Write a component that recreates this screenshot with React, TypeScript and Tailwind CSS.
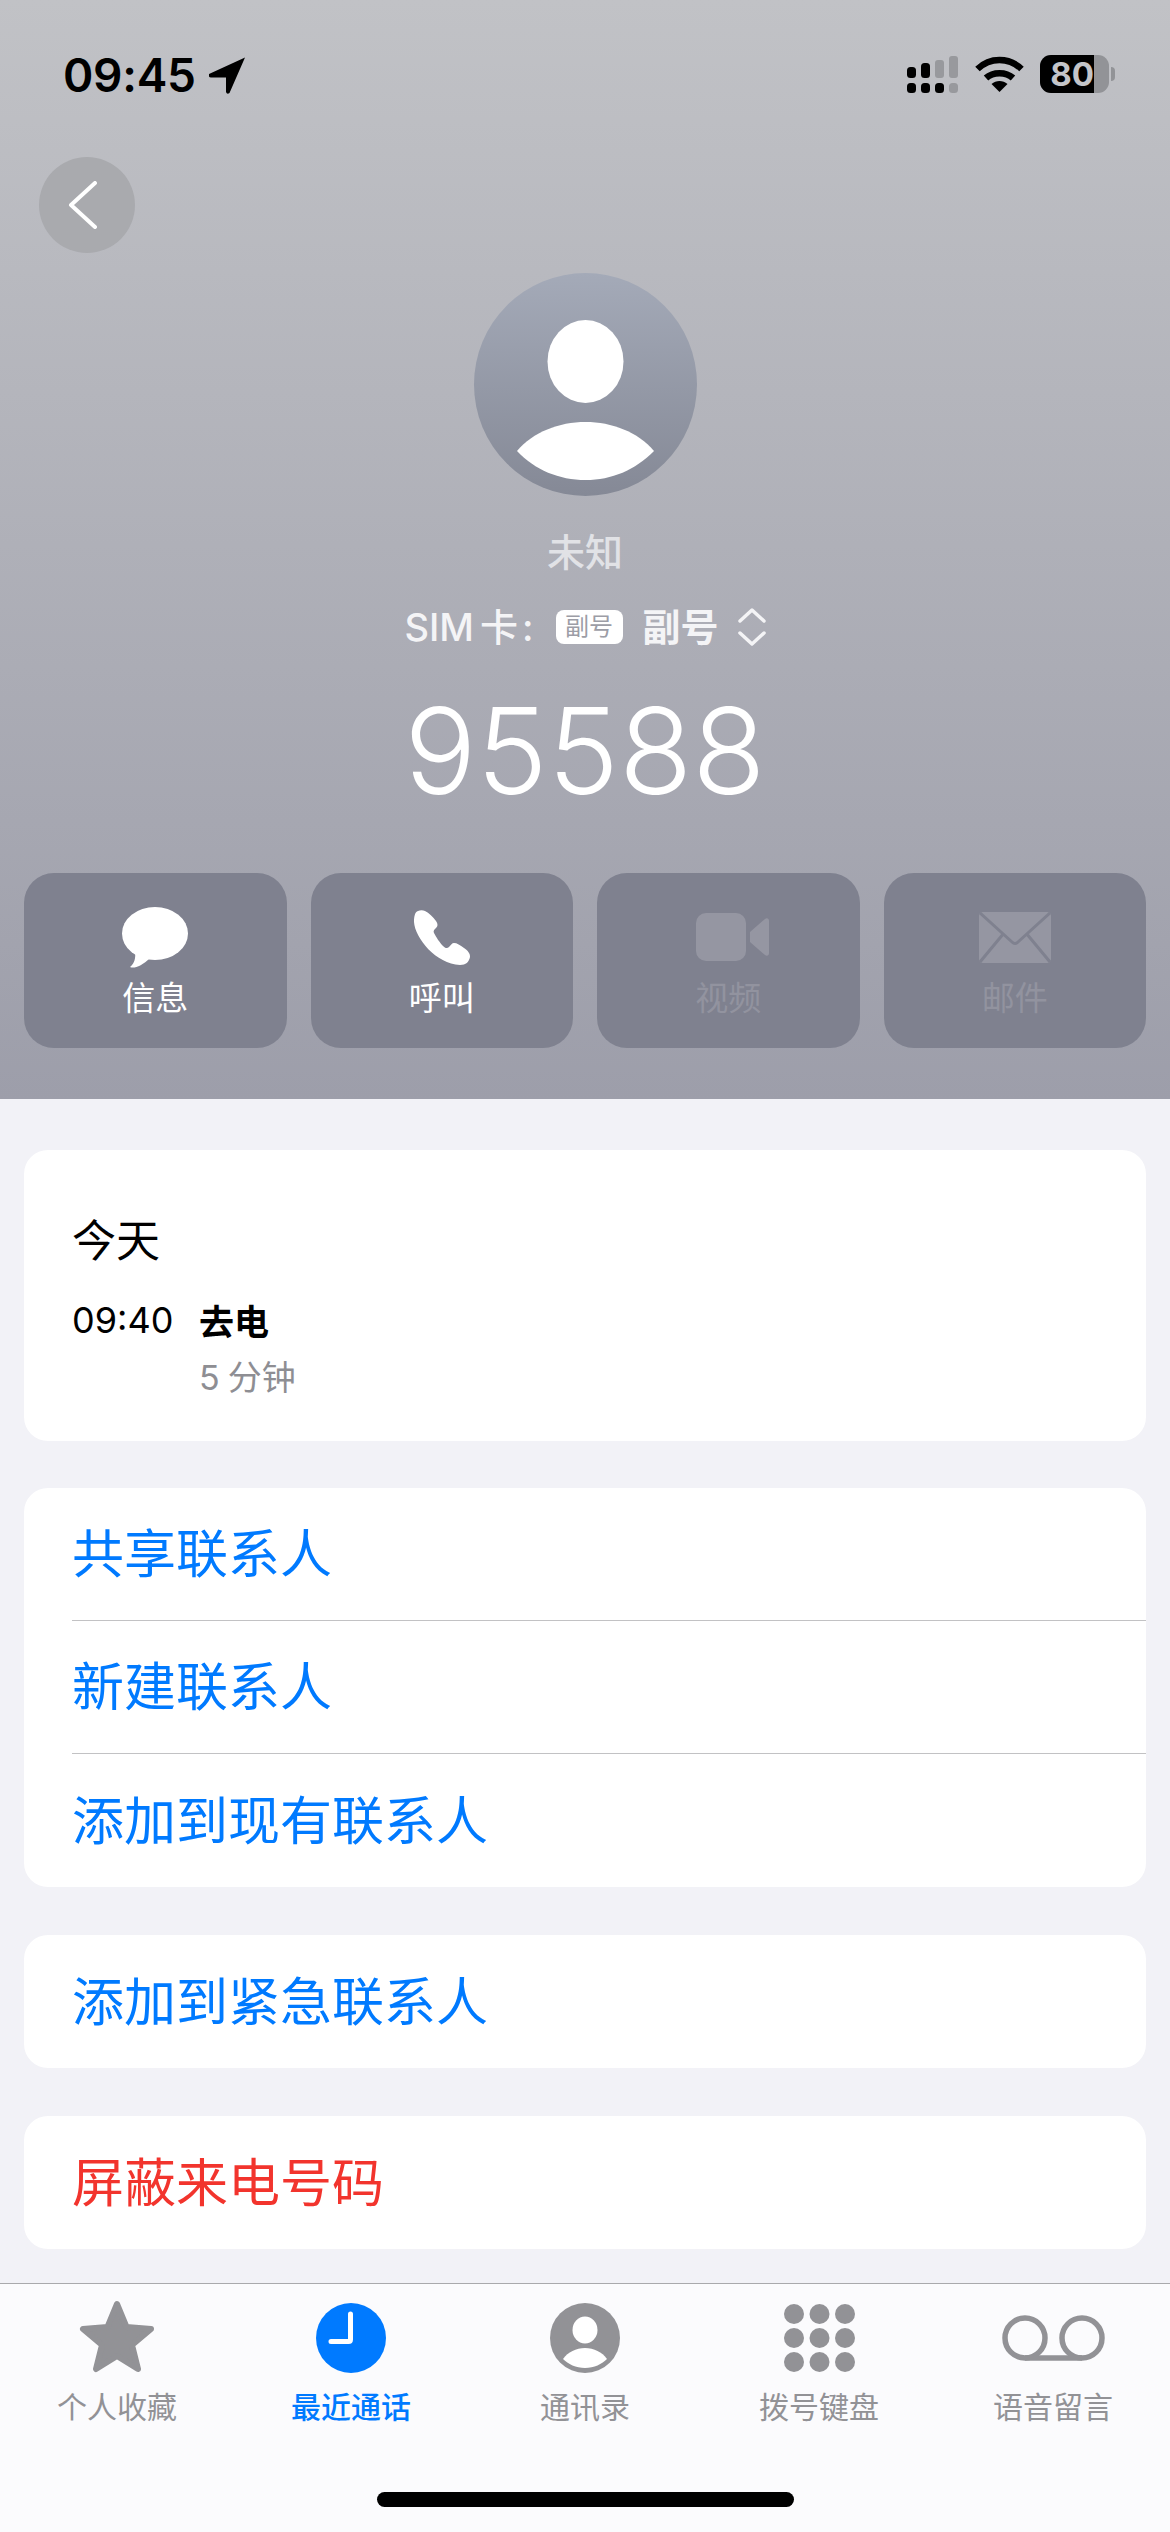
import type { ReactNode } from "react";

const actions = [
  { label: "信息", off: false, icon: <BubbleIcon /> },
  { label: "呼叫", off: false, icon: <PhoneIcon /> },
  { label: "视频", off: true, icon: <VideoIcon /> },
  { label: "邮件", off: true, icon: <MailIcon /> },
];

const tabs = [
  { label: "个人收藏", active: false, icon: <StarIcon /> },
  { label: "最近通话", active: true, icon: <ClockIcon /> },
  { label: "通讯录", active: false, icon: <PersonIcon /> },
  { label: "拨号键盘", active: false, icon: <KeypadIcon /> },
  { label: "语音留言", active: false, icon: <VoicemailIcon /> },
];

function BubbleIcon() {
  return (
    <svg width="66" height="61" viewBox="0 0 66 61" fill="#fff">
      <ellipse cx="33" cy="26.5" rx="33" ry="26.5" />
      <path d="M13 44 C14 52 12 57 8 60 C12 62 20 59 28 51 Z" />
    </svg>
  );
}

function PhoneIcon() {
  return (
    <svg width="56" height="55" viewBox="0 0 56 55" fill="#fff">
      <path d="M4 1 C1 2 0 6 0 12 C1 28 22 54 46 55 C52 55 55 52 56 47 C56 43 54 41 50 38 C46 35 43 33 40 33 C38 33 37 35 35 37 C33 39 31 38 29 36 C26 33 22 27 20 23 C19 21 20 20 22 18 C24 16 24 14 22 11 C19 7 15 3 11 1 C9 0 6 0 4 1 Z" />
    </svg>
  );
}

function VideoIcon() {
  return (
    <svg className="ml-2" width="73" height="48" viewBox="0 0 73 48" fill="#9596a2">
      <rect x="0" y="0" width="50" height="48" rx="10" />
      <path d="M54 19 L69 6 C71 4.500 73 5.500 73 8 V40 C73 42.500 71 43.500 69 42 L54 29 Z" />
    </svg>
  );
}

function MailIcon() {
  return (
    <svg width="72" height="51" viewBox="0 0 72 51">
      <rect width="72" height="51" rx="4" fill="#9596a2" />
      <path d="M1 1 L33 30 Q36 33 39 30 L71 1 M1 50 L25 21 M71 50 L47 21" fill="none" stroke="#7f818f" strokeWidth="3" />
    </svg>
  );
}

function StarIcon() {
  return (
    <svg className="-mt-1" width="76" height="73" viewBox="0 0 76 73" fill="#929296">
      <path
        d="M38 4 L47.500 27 L72 29 L53 45 L59 69 L38 56 L17 69 L23 45 L4 29 L28.500 27 Z"
        stroke="#929296"
        strokeWidth="6"
        strokeLinejoin="round"
      />
    </svg>
  );
}

function ClockIcon() {
  return (
    <svg width="70" height="70" viewBox="0 0 70 70">
      <circle cx="35" cy="35" r="35" fill="#007aff" />
      <path d="M34.500 11 V36.500 Q34.500 38.500 32.500 38.500 H15" fill="none" stroke="#fff" strokeWidth="5" strokeLinecap="round" />
    </svg>
  );
}

function PersonIcon() {
  return (
    <svg width="70" height="70" viewBox="0 0 70 70">
      <circle cx="35" cy="35" r="35" fill="#929296" />
      <ellipse cx="35" cy="27" rx="12.500" ry="13.500" fill="#fff" />
      <path d="M13 56 C18 49 26 45 35 45 C44 45 52 49 57 56 C52 61 44 65 35 65 C26 65 18 61 13 56 Z" fill="#fff" />
    </svg>
  );
}

function KeypadIcon() {
  const xs = [10, 35.500, 61];
  const ys = [10, 34, 58];
  return (
    <svg width="71" height="68" viewBox="0 0 71 68" fill="#929296">
      {ys.map((y) => xs.map((x) => <circle key={`${x}-${y}`} cx={x} cy={y} r="10" />))}
    </svg>
  );
}

function VoicemailIcon() {
  return (
    <svg width="103" height="46" viewBox="0 0 103 46" fill="none" stroke="#929296" strokeWidth="5.500">
      <circle cx="23" cy="23" r="20" />
      <circle cx="80" cy="23" r="20" />
      <path d="M23 43 H80" />
    </svg>
  );
}

function StatusIcons() {
  return (
    <div className="flex items-center">
      <svg width="52" height="37" viewBox="0 0 52 37">
        <g fill="#000">
          <rect x="0" y="11" width="9" height="11" rx="3.500" />
          <rect x="14" y="7" width="9" height="15" rx="3.500" />
          <rect x="0" y="27" width="9" height="10" rx="3.500" />
          <rect x="14" y="27" width="9" height="10" rx="3.500" />
          <rect x="28" y="27" width="9" height="10" rx="3.500" />
        </g>
        <g fill="#98999d">
          <rect x="28" y="4" width="9" height="18" rx="3" />
          <rect x="42" y="0" width="9" height="22" rx="3" />
          <rect x="42" y="27" width="9" height="10" rx="3.500" />
        </g>
      </svg>
      <svg className="ml-4" width="49" height="36" viewBox="0 0 49 36" fill="none" stroke="#000">
        <path d="M2.500 13 C15 1 34 1 46.500 13" strokeWidth="6.500" />
        <path d="M11 22 C18 15.500 31 15.500 38 22" strokeWidth="6.500" />
        <path d="M24.500 36 L16.500 28 C21 24 28 24 32.500 28 Z" fill="#000" stroke="none" />
      </svg>
      <div className="ml-4 flex h-[38px] w-[69px] overflow-hidden rounded-[11px] bg-[#929397]">
        <div className="flex w-[54px] items-center justify-end overflow-hidden bg-black text-[33px] leading-none font-bold text-[#c4c5c9]">
          80
        </div>
      </div>
      <div className="ml-0.5 h-3.5 w-1 rounded-r-full bg-[#929397]" />
    </div>
  );
}

function Card({ className = "", children }: { className?: string; children: ReactNode }) {
  return <div className={`overflow-hidden rounded-[24px] bg-white ${className}`}>{children}</div>;
}

function LinkRow({ label, red, line }: { label: string; red?: boolean; line?: boolean }) {
  return (
    <div className="pl-12">
      <div
        className={`flex h-[133px] items-center border-[#c2c2c4] pt-0.5 text-[52px] leading-none ${
          line ? "border-b" : ""
        } ${red ? "text-[#f2342d]" : "text-[#007aff]"}`}
      >
        {label}
      </div>
    </div>
  );
}

export default function App() {
  return (
    <div className="flex h-[2532px] w-[1170px] flex-col overflow-hidden bg-[#f2f2f7] font-['Inter','Noto_Sans_CJK_SC',sans-serif] text-black">
      <header className="flex h-[1099px] flex-col bg-gradient-to-b from-[#c1c2c6] to-[#9d9eaa]">
        <div className="flex h-[157px] items-start justify-between pt-[55px] pr-[55px] pl-[63px]">
          <div className="flex items-center gap-[13px]">
            <span className="text-[46px] leading-[40px] font-semibold tracking-[-0.25px]">09:45</span>
            <svg width="37" height="37" viewBox="0 0 37 37" fill="#000">
              <path d="M36 0.500 L0 17 Q-1 20 2 20.500 L17 20.500 L17 35 Q18 38 20.500 36 Z" />
            </svg>
          </div>
          <StatusIcons />
        </div>

        <button className="ml-[39px] flex size-[96px] items-center justify-center rounded-full bg-[#a9aaae]">
          <svg className="-ml-2" width="30" height="48" viewBox="0 0 30 48" fill="none" stroke="#fff" strokeWidth="4" strokeLinecap="round" strokeLinejoin="round">
            <path d="M27 2 L3 24 L27 46" />
          </svg>
        </button>

        <div className="mt-5 flex flex-col items-center">
          <div className="flex size-[223px] items-start justify-center rounded-full bg-gradient-to-b from-[#a4aab8] to-[#858996]">
            <svg width="137" height="160" viewBox="0 0 137 160" className="mt-[47px]" fill="#fff">
              <ellipse cx="68.500" cy="41.500" rx="38" ry="41.500" />
              <path d="M0 131 C16 112 42 102 68.500 102 C95 102 121 112 137 131 C118 150 95 160 68.500 160 C42 160 18 150 0 131 Z" />
            </svg>
          </div>
          <div className="mt-[33px] text-[38px] leading-[46px] font-medium text-[#e1e2e6]">未知</div>
          <div className="mt-[27px] flex h-[50px] items-center text-[38px] leading-none font-medium text-[#f4f4f6]">
            <span>SIM</span>
            <span className="ml-1.5">卡</span>
            <span className="ml-1">:</span>
            <span className="ml-[22px] flex h-[34px] w-[67px] items-center justify-center rounded-lg bg-white text-[24px] font-normal text-[#9c9da6]">
              副号
            </span>
            <span className="ml-5 font-semibold">副号</span>
            <svg className="ml-[19px]" width="28" height="38" viewBox="0 0 28 38" fill="none" stroke="#f4f4f6" strokeWidth="3.500" strokeLinecap="round" strokeLinejoin="round">
              <path d="M2 13 L14 2 L26 13 M2 25 L14 36 L26 25" />
            </svg>
          </div>
          <div className="mt-[30px] text-[120px] leading-[138px] font-[350] text-white">95588</div>
        </div>

        <div className="mt-[53px] grid grid-cols-4 gap-6 px-6">
          {actions.map((a) => (
            <div
              key={a.label}
              className="flex h-[175px] flex-col items-center rounded-[30px] bg-[#7f818f]"
            >
              <div className="flex h-[100px] items-center justify-center pt-[28px]">{a.icon}</div>
              <div className={`mt-1 text-[33px] leading-[42px] ${a.off ? "text-[#92939f]" : "text-white"}`}>
                {a.label}
              </div>
            </div>
          ))}
        </div>
      </header>

      <main className="flex-1 px-6 pt-[51px]">
        <Card className="h-[291px] pt-[66px] pl-12">
          <div className="text-[44px] leading-[50px]">今天</div>
          <div className="mt-[27px] flex">
            <div className="w-[127px] pt-[5px] text-[36px] leading-[44px]">09:40</div>
            <div className="pt-[7px]">
              <div className="text-[35px] leading-[44px] font-semibold">去电</div>
              <div className="mt-3 flex text-[34px] leading-[44px] text-[#8e8e93]">
                <span>5</span>
                <span className="ml-2">分钟</span>
              </div>
            </div>
          </div>
        </Card>
        <Card className="mt-[47px]">
          <LinkRow label="共享联系人" line />
          <LinkRow label="新建联系人" line />
          <LinkRow label="添加到现有联系人" />
        </Card>
        <Card className="mt-12">
          <LinkRow label="添加到紧急联系人" />
        </Card>
        <Card className="mt-12">
          <LinkRow label="屏蔽来电号码" red />
        </Card>
      </main>

      <footer className="flex h-[249px] flex-col border-t-[1.500px] border-[#a9a9ac] bg-[#fbfbfd]">
        <div className="grid grid-cols-5">
          {tabs.map((t) => (
            <div key={t.label} className="flex flex-col items-center">
              <div className="flex h-[105px] items-center justify-center pt-[3px]">{t.icon}</div>
              <div className={`text-[30px] leading-[36px] ${t.active ? "font-medium text-[#007aff]" : "text-[#929296]"}`}>
                {t.label}
              </div>
            </div>
          ))}
        </div>
        <div className="mx-auto mt-[67px] h-[15px] w-[417px] rounded-full bg-black" />
      </footer>
    </div>
  );
}
